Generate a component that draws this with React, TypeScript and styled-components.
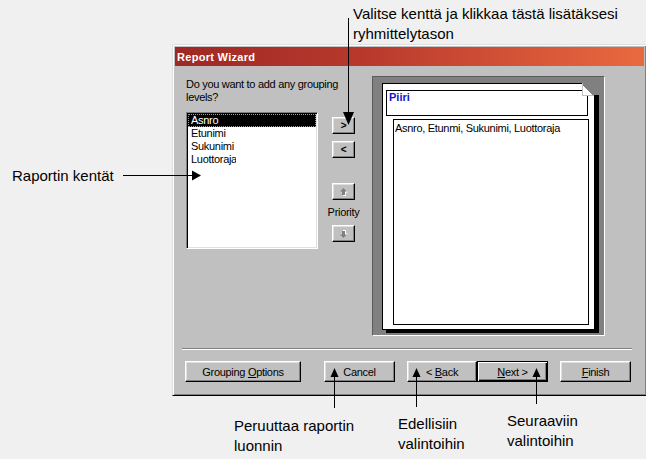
import React from "react";
import styled, { createGlobalStyle, css } from "styled-components";

const Global = createGlobalStyle`
  html, body {
    margin: 0;
    padding: 0;
    background: #f0f0f0;
    overflow: hidden;
  }
`;

const Page = styled.div`
  position: relative;
  width: 646px;
  height: 459px;
  overflow: hidden;
  background: #f0f0f0;
  color: #000;
  font-family: "Liberation Sans", Arial, sans-serif;
`;

/* ---------- annotations ---------- */

const Note = styled.div`
  font-size: 15px;
  line-height: 20px;
  white-space: nowrap;
`;

const TopNote = styled(Note)`
  height: 44px;
  box-sizing: border-box;
  padding: 4px 0 0 353px;
`;

const Middle = styled.div`
  display: flex;
  align-items: flex-start;
`;

const SideNote = styled(Note)`
  width: 172px;
  flex-shrink: 0;
  box-sizing: border-box;
  padding: 122px 0 0 12px;
`;

const BottomNotes = styled.div`
  display: grid;
  grid-template-columns: 164px 109px 1fr;
  align-items: start;
  padding-left: 234px;
`;

const Caption = styled(Note)<{ $top: number }>`
  margin-top: ${(p) => p.$top}px;
`;

const Leaders = styled.svg`
  position: absolute;
  top: 0;
  left: 0;
  pointer-events: none;
`;

/* ---------- dialog ---------- */

const Dialog = styled.div`
  width: 475px;
  flex-shrink: 0;
  box-sizing: border-box;
  background: #c0c0c0;
  border: 1px solid;
  border-color: #dfdfdf #000 #000 #dfdfdf;
  box-shadow: inset 1px 1px #fff, inset -1px -1px #808080;
  padding: 2px;
  display: flex;
  flex-direction: column;
  font-size: 11px;
  letter-spacing: -0.3px;
`;

const TitleBar = styled.div`
  height: 19px;
  display: flex;
  align-items: center;
  padding-left: 2px;
  background: linear-gradient(90deg, #9e2824 0%, #b8392c 40%, #e9693f 100%);
  color: #fff;
  font-weight: bold;
  letter-spacing: 0.3px;
`;

const Body = styled.div`
  display: flex;
  padding: 10px 39px 0 11px;
`;

const LeftPane = styled.div`
  width: 186px;
  flex-shrink: 0;
  display: flex;
  flex-direction: column;
`;

const Question = styled.div`
  margin-top: 2px;
  line-height: 13px;
  width: 160px;
`;

const ListRow = styled.div`
  display: flex;
  align-items: flex-start;
  margin-top: 8px;
`;

const ListBox = styled.div`
  width: 132px;
  height: 137px;
  box-sizing: border-box;
  background: #fff;
  border: 1px solid;
  border-color: #808080 #fff #fff #808080;
  box-shadow: inset 1px 1px #000, inset -1px -1px #dfdfdf;
  padding: 1px;
`;

const ListItem = styled.div<{ $selected?: boolean }>`
  height: 13px;
  line-height: 13px;
  padding-left: 3px;
  ${(p) =>
    p.$selected &&
    css`
      background: #000;
      color: #fff;
      outline: 1px dotted #9a9a9a;
      outline-offset: -1px;
    `}
`;

const ItemLabel = styled.span`
  display: inline-block;
  width: 45px;
  overflow: hidden;
  white-space: nowrap;
  vertical-align: top;
`;

const ButtonCol = styled.div`
  width: 23px;
  margin-left: 14px;
  padding-top: 5px;
  display: flex;
  flex-direction: column;
  align-items: center;
`;

const raised = css`
  box-sizing: border-box;
  background: #c0c0c0;
  border: 1px solid;
  border-color: #fff #000 #000 #fff;
  box-shadow: inset -1px -1px #808080, inset 1px 1px #dfdfdf;
  font-family: inherit;
  color: #000;
  padding: 0;
  display: flex;
  align-items: center;
  justify-content: center;
`;

const NavButton = styled.div<{ $gap: number }>`
  ${raised};
  width: 23px;
  height: 17px;
  margin-top: ${(p) => p.$gap}px;
  font-size: 10px;
  font-weight: bold;
`;

const Priority = styled.div`
  margin-top: 6px;
  line-height: 13px;
  white-space: nowrap;
`;

const Preview = styled.div`
  width: 233px;
  height: 260px;
  box-sizing: border-box;
  background: #808080;
  border: 1px solid;
  border-color: #5c5c5c #fff #fff #5c5c5c;
  padding: 6px 0 0 9px;
`;

const Sheet = styled.div`
  position: relative;
  width: 213px;
  height: 247px;
  box-sizing: border-box;
  background: #fff;
  border: 1px solid #000;
  box-shadow: 4px 3px 0 #000;
  display: flex;
  flex-direction: column;
`;

const Fold = styled.svg`
  position: absolute;
  top: -1px;
  left: 199px;
`;

const GroupHeader = styled.div`
  width: 202px;
  height: 26px;
  box-sizing: border-box;
  margin: 6px 0 0 3px;
  border: 1px solid #000;
  padding: 0 2px;
  line-height: 13px;
  color: #1414c8;
  font-weight: bold;
  letter-spacing: 0;
`;

const DetailBox = styled.div`
  width: 196px;
  height: 206px;
  box-sizing: border-box;
  margin: 3px 0 0 10px;
  border: 1px solid #000;
  padding: 2px 1px;
  line-height: 13px;
  white-space: nowrap;
`;

const Separator = styled.div`
  height: 2px;
  box-sizing: border-box;
  margin: 12px 12px 0 7px;
  border-top: 1px solid #808080;
  border-bottom: 1px solid #fff;
`;

const Footer = styled.div`
  display: flex;
  gap: 12px;
  margin-top: 11px;
  padding: 0 0 11px 10px;
`;

const Pair = styled.div`
  display: flex;
`;

const Button = styled.div<{ $w: number; $default?: boolean; $after?: number }>`
  ${raised};
  width: ${(p) => p.$w}px;
  height: 21px;
  margin-right: ${(p) => p.$after ?? 0}px;
  ${(p) =>
    p.$default &&
    css`
      border-color: #000;
      box-shadow: inset 1px 1px #fff, inset -1px -1px #000, inset -2px -2px #808080;
    `}
`;

const UpDownIcon = ({ down }: { down?: boolean }) => {
  const pts = "3.5,0 7,3.5 5,3.5 5,7 2,7 2,3.5 0,3.5";
  return (
    <svg width="8" height="8" viewBox="0 0 8 8" style={down ? { transform: "scaleY(-1)" } : undefined}>
      <polygon points={pts} fill="#fff" transform="translate(1 1)" />
      <polygon points={pts} fill="#808080" />
    </svg>
  );
};

export default function App() {
  return (
    <Page>
      <Global />
      <TopNote>
        Valitse kenttä ja klikkaa tästä lisätäksesi
        <br />
        ryhmittelytason
      </TopNote>

      <Middle>
        <SideNote>Raportin kentät</SideNote>

        <Dialog>
          <TitleBar>Report Wizard</TitleBar>

          <Body>
            <LeftPane>
              <Question>
                Do you want to add any grouping
                <br />
                levels?
              </Question>
              <ListRow>
                <ListBox>
                  <ListItem $selected>
                    <ItemLabel>Asnro</ItemLabel>
                  </ListItem>
                  <ListItem>
                    <ItemLabel>Etunimi</ItemLabel>
                  </ListItem>
                  <ListItem>
                    <ItemLabel>Sukunimi</ItemLabel>
                  </ListItem>
                  <ListItem>
                    <ItemLabel>Luottoraja</ItemLabel>
                  </ListItem>
                </ListBox>
                <ButtonCol>
                  <NavButton $gap={0}>&gt;</NavButton>
                  <NavButton $gap={7}>&lt;</NavButton>
                  <NavButton $gap={25}>
                    <UpDownIcon />
                  </NavButton>
                  <Priority>Priority</Priority>
                  <NavButton $gap={6}>
                    <UpDownIcon down />
                  </NavButton>
                </ButtonCol>
              </ListRow>
            </LeftPane>

            <Preview>
              <Sheet>
                <GroupHeader>Piiri</GroupHeader>
                <DetailBox>Asnro, Etunmi, Sukunimi, Luottoraja</DetailBox>
                <Fold width="17" height="14" viewBox="0 0 17 14" shapeRendering="crispEdges">
                  <polygon points="0,0 17,0 17,12 12,12" fill="#808080" />
                  <polygon points="0,0 12,12 0,12" fill="#fff" />
                  <line x1="0" y1="0.5" x2="12" y2="12.5" stroke="#000" shapeRendering="auto" />
                  <line x1="0.5" y1="0" x2="0.5" y2="12" stroke="#c0c0c0" />
                  <line x1="0" y1="12.5" x2="12" y2="12.5" stroke="#c0c0c0" />
                </Fold>
              </Sheet>
            </Preview>
          </Body>

          <Separator />

          <Footer>
            <Button $w={116} $after={11}>
              <span>
                Grouping <u>O</u>ptions
              </span>
            </Button>
            <Button $w={71}>Cancel</Button>
            <Pair>
              <Button $w={70}>
                <span>
                  &lt; <u>B</u>ack
                </span>
              </Button>
              <Button $w={71} $default>
                <span>
                  <u>N</u>ext &gt;
                </span>
              </Button>
            </Pair>
            <Button $w={71}>
              <span>
                <u>F</u>inish
              </span>
            </Button>
          </Footer>
        </Dialog>
      </Middle>

      <BottomNotes>
        <Caption $top={20}>
          Peruuttaa raportin
          <br />
          luonnin
        </Caption>
        <Caption $top={18}>
          Edellisiin
          <br />
          valintoihin
        </Caption>
        <Caption $top={15}>
          Seuraaviin
          <br />
          valintoihin
        </Caption>
      </BottomNotes>

      <Leaders width="646" height="459" viewBox="0 0 646 459">
        <g stroke="#000" strokeWidth="1" shapeRendering="crispEdges">
          <line x1="348.5" y1="18" x2="348.5" y2="113" />
          <line x1="123" y1="175.5" x2="193" y2="175.5" />
          <line x1="334.5" y1="376" x2="334.5" y2="408" />
          <line x1="416.5" y1="376" x2="416.5" y2="407" />
          <line x1="536.5" y1="376" x2="536.5" y2="404" />
        </g>
        <g fill="#000">
          <polygon points="343,112 354,112 348.5,125" />
          <polygon points="192,170.5 192,180.5 201,175.5" />
          <polygon points="330.5,377 338.5,377 334.5,368" />
          <polygon points="412.5,377 420.5,377 416.5,368" />
          <polygon points="532.5,377 540.5,377 536.5,368" />
        </g>
      </Leaders>
    </Page>
  );
}
